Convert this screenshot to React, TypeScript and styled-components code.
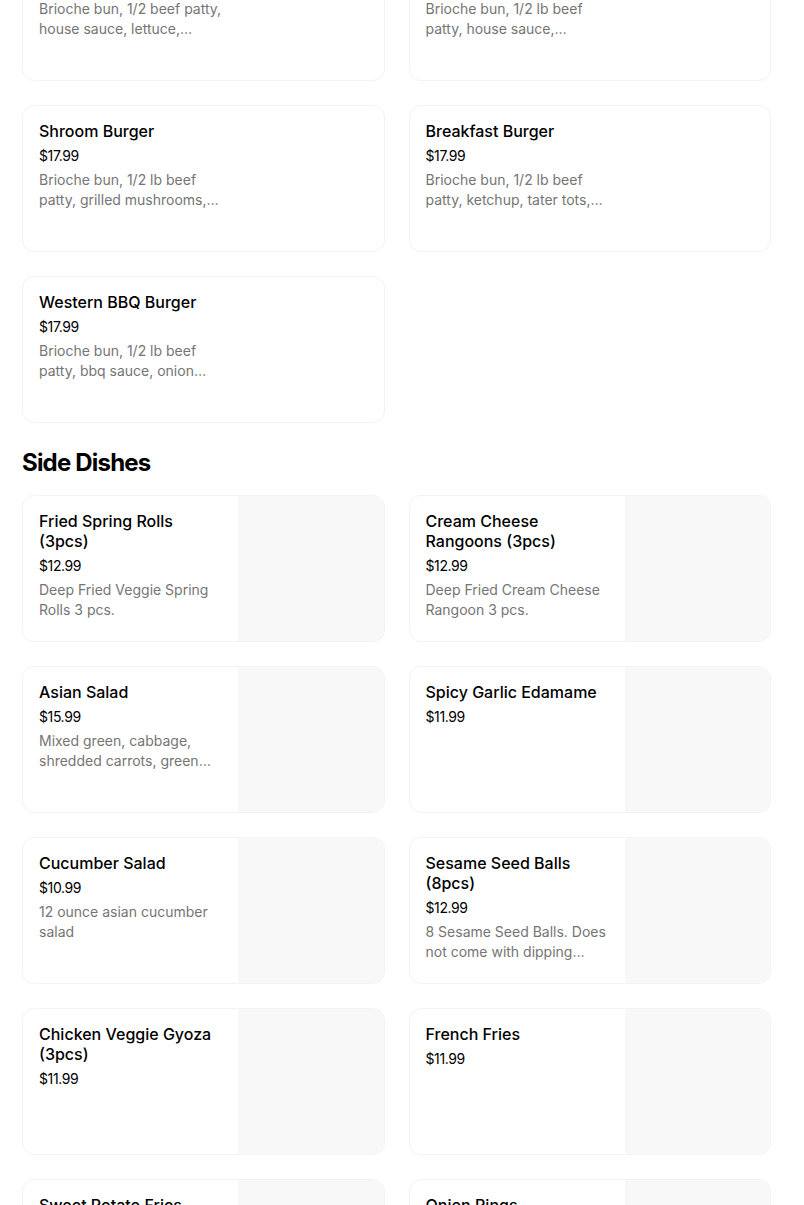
import styled, { createGlobalStyle } from 'styled-components'

const GlobalStyle = createGlobalStyle`
  * { box-sizing: border-box; }
  body {
    margin: 0;
    background: #ffffff;
    font-family: Inter, "Liberation Sans", Arial, sans-serif;
    color: #000000;
  }
`

type Item = {
  name: string
  price: string
  desc?: string
  image?: boolean
}

const burgers: Item[] = [
  { name: 'Classic Burger', price: '$16.99', desc: 'Brioche bun, 1/2 beef patty, house sauce, lettuce, bread and butter pickles, onion, tomato' },
  { name: 'Avocado Burger', price: '$17.99', desc: 'Brioche bun, 1/2 lb beef patty, house sauce, avocado, lettuce, tomato, onion' },
  { name: 'Shroom Burger', price: '$17.99', desc: 'Brioche bun, 1/2 lb beef patty, grilled mushrooms, swiss cheese, garlic aioli' },
  { name: 'Breakfast Burger', price: '$17.99', desc: 'Brioche bun, 1/2 lb beef patty, ketchup, tater tots, fried egg, bacon, cheddar' },
  { name: 'Western BBQ Burger', price: '$17.99', desc: 'Brioche bun, 1/2 lb beef patty, bbq sauce, onion rings, bacon, cheddar cheese' },
]

const sides: Item[] = [
  { name: 'Fried Spring Rolls (3pcs)', price: '$12.99', desc: 'Deep Fried Veggie Spring Rolls 3 pcs.', image: true },
  { name: 'Cream Cheese Rangoons (3pcs)', price: '$12.99', desc: 'Deep Fried Cream Cheese Rangoon 3 pcs.', image: true },
  { name: 'Asian Salad', price: '$15.99', desc: 'Mixed green, cabbage, shredded carrots, green onion, crispy wonton, sesame dressing', image: true },
  { name: 'Spicy Garlic Edamame', price: '$11.99', image: true },
  { name: 'Cucumber Salad', price: '$10.99', desc: '12 ounce asian cucumber salad', image: true },
  { name: 'Sesame Seed Balls (8pcs)', price: '$12.99', desc: '8 Sesame Seed Balls. Does not come with dipping sauce.', image: true },
  { name: 'Chicken Veggie Gyoza (3pcs)', price: '$11.99', image: true },
  { name: 'French Fries', price: '$11.99', image: true },
  { name: 'Sweet Potato Fries', price: '$11.99', image: true },
  { name: 'Onion Rings', price: '$11.99', image: true },
]

const S_page = styled.main`
  margin-top: -66px;
  padding: 0 22px 40px 22px;
  width: 793px;
`
const S_grid = styled.div`
  display: grid;
  grid-template-columns: 1fr 1fr;
  gap: 24px;
`
const S_h2 = styled.h2`
  margin: 24px 0 16px 0;
  font-size: 24px;
  line-height: 32px;
  font-weight: 700;
  letter-spacing: -0.8px;
  color: #000000;
`
const S_card = styled.div`
  display: flex;
  height: 147px;
  border: 1px solid #f3f3f3;
  border-radius: 12px;
  overflow: hidden;
  background: #ffffff;
`
const S_info = styled.div`
  flex: 0 0 215px;
  padding: 15px 16px 16px 16px;
  display: flex;
  flex-direction: column;
`
const S_title = styled.h3`
  margin: 0;
  font-size: 16px;
  line-height: 20px;
  font-weight: 500;
  color: #000000;
  display: -webkit-box;
  -webkit-line-clamp: 2;
  -webkit-box-orient: vertical;
  overflow: hidden;
`
const S_price = styled.div`
  margin-top: 5px;
  font-size: 14px;
  line-height: 20px;
  letter-spacing: -0.4px;
  color: #000000;
`
const S_desc = styled.p`
  margin: 4px 0 0 0;
  font-size: 14px;
  line-height: 20px;
  color: #757575;
  display: -webkit-box;
  -webkit-line-clamp: 2;
  -webkit-box-orient: vertical;
  overflow: hidden;
`
const S_thumb = styled.div`
  flex: 1;
  background: #f8f8f8;
`

const Card = ({ item }: { item: Item }) => (
  <S_card>
    <S_info>
      <S_title>{item.name}</S_title>
      <S_price>{item.price}</S_price>
      {item.desc && <S_desc>{item.desc}</S_desc>}
    </S_info>
    {item.image && <S_thumb />}
  </S_card>
)

const App = () => {
  return (
    <>
      <GlobalStyle />
      <S_page>
        <S_grid>
          {burgers.map((b) => <Card key={b.name} item={b} />)}
        </S_grid>

        <S_h2>Side Dishes</S_h2>
        <S_grid>
          {sides.map((s) => <Card key={s.name} item={s} />)}
        </S_grid>
      </S_page>
    </>
  )
}

export default App
